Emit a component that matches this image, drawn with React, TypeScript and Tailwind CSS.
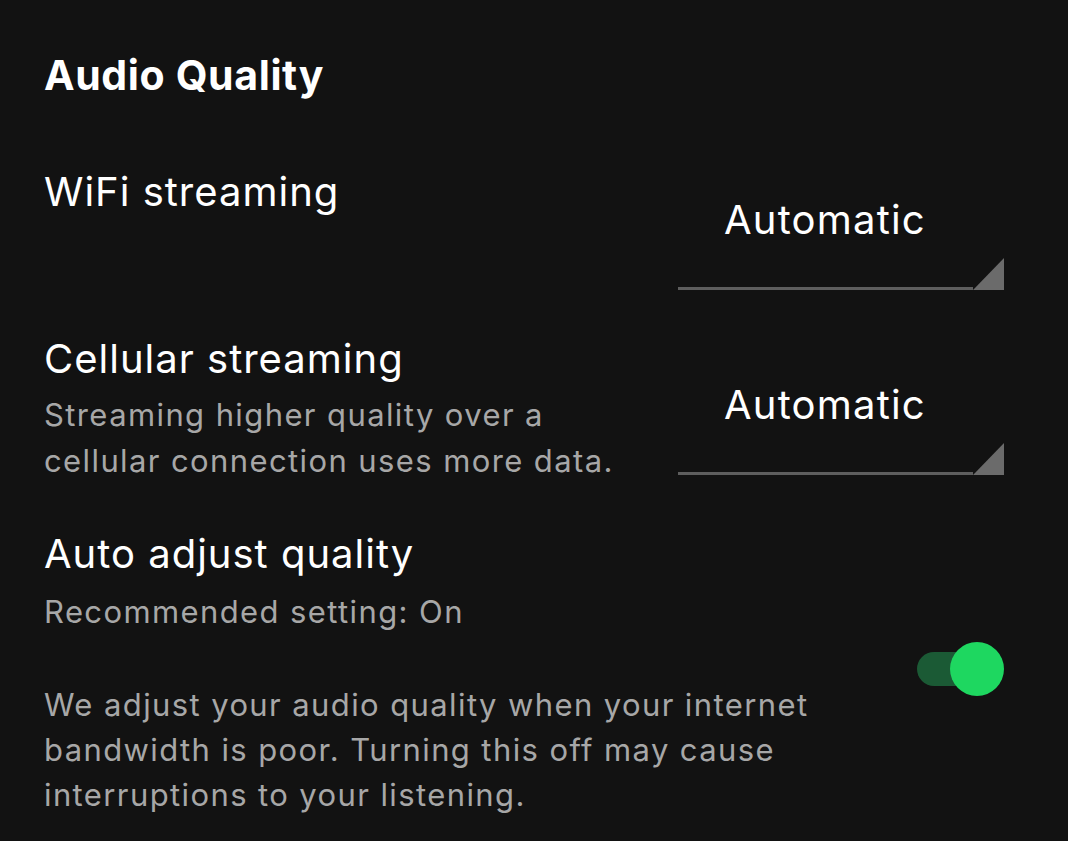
import { type ReactNode } from 'react'

const font = { fontFamily: 'Inter, "Noto Sans", sans-serif' }

function QualitySelect({ value, className = '', gap = 'mt-[18px]' }: { value: string; className?: string; gap?: string }) {
  return (
    <div className={`flex w-[326px] shrink-0 flex-col ${className}`}>
      <span className="pl-[46px] text-[40px] leading-[46px] tracking-[0.03em] text-white">{value}</span>
      <div className={`flex items-end ${gap}`}>
        <div className="h-[3px] flex-1 bg-[#5e5e5e]" />
        <svg width="31" height="32" viewBox="0 0 31 32" className="block">
          <polygon points="31,0 31,32 0,32" fill="#6b6b6b" />
        </svg>
      </div>
    </div>
  )
}

function SettingTitle({ children }: { children: ReactNode }) {
  return <p className="text-[40px] leading-[46px] tracking-[0.025em] text-white">{children}</p>
}

function SettingHint({ children, className = '' }: { children: ReactNode; className?: string }) {
  return <p className={`text-[31px] leading-[46px] tracking-[0.045em] text-[#a7a7a7] ${className}`}>{children}</p>
}

function Toggle({ on }: { on: boolean }) {
  return (
    <div className="-mt-[10px] flex h-[54px] w-[87px] shrink-0 items-center">
      <div className={`flex h-[34px] w-[66px] items-center rounded-full ${on ? 'bg-[#1b5a35]' : 'bg-[#535353]'}`}>
        <div className="h-[54px] w-[54px] translate-x-[33px] rounded-full bg-[#1ed760]" />
      </div>
    </div>
  )
}

export default function App() {
  return (
    <div style={font} className="min-h-screen bg-[#121212] pl-[44px] pr-[64px] pt-[51px]">
      <h1 className="text-[41px] font-bold leading-[48px] tracking-[0.015em] text-white">Audio Quality</h1>

      <div className="mt-[70px] flex items-start justify-between">
        <SettingTitle>WiFi streaming</SettingTitle>
        <QualitySelect value="Automatic" className="mt-[28px]" gap="mt-[15px]" />
      </div>

      <div className="mt-[46px] flex items-start justify-between">
        <div>
          <SettingTitle>Cellular streaming</SettingTitle>
          <SettingHint className="mt-[10px]">
            Streaming higher quality over a
            <br />
            cellular connection uses more data.
          </SettingHint>
        </div>
        <QualitySelect value="Automatic" className="mt-[46px]" gap="mt-[15px]" />
      </div>

      <div className="mt-[47px] flex items-center justify-between">
        <div>
          <SettingTitle>Auto adjust quality</SettingTitle>
          <SettingHint className="mt-[12px]">Recommended setting: On</SettingHint>
          <p className="mt-[47px] text-[31px] leading-[45px] tracking-[0.045em] text-[#a7a7a7]">
            We adjust your audio quality when your internet
            <br />
            bandwidth is poor. Turning this off may cause
            <br />
            interruptions to your listening.
          </p>
        </div>
        <Toggle on />
      </div>
    </div>
  )
}
